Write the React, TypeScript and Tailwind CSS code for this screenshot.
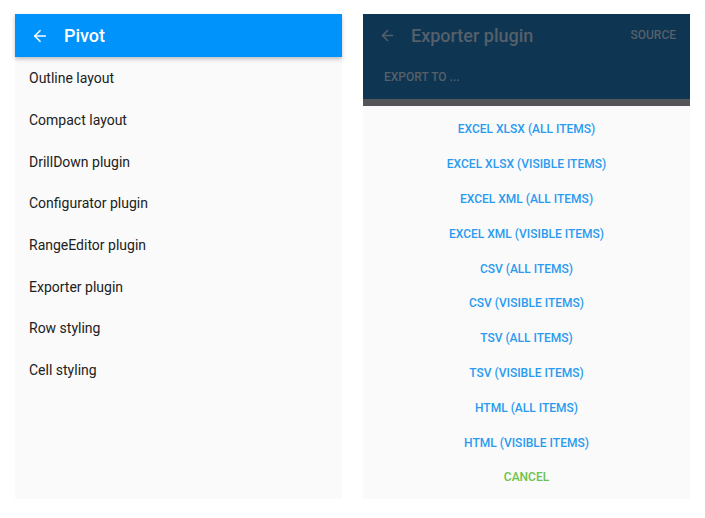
import { ArrowLeft } from "lucide-react";

const demos = [
  "Outline layout",
  "Compact layout",
  "DrillDown plugin",
  "Configurator plugin",
  "RangeEditor plugin",
  "Exporter plugin",
  "Row styling",
  "Cell styling",
];

const exportOptions = [
  "EXCEL XLSX (ALL ITEMS)",
  "EXCEL XLSX (VISIBLE ITEMS)",
  "EXCEL XML (ALL ITEMS)",
  "EXCEL XML (VISIBLE ITEMS)",
  "CSV (ALL ITEMS)",
  "CSV (VISIBLE ITEMS)",
  "TSV (ALL ITEMS)",
  "TSV (VISIBLE ITEMS)",
  "HTML (ALL ITEMS)",
  "HTML (VISIBLE ITEMS)",
];

function PivotScreen() {
  return (
    <div className="flex h-[485px] w-[327px] flex-col bg-[#fafafa]">
      <div className="relative z-10 flex h-[43px] items-center bg-[#0093fb] px-[16px] shadow-[0_2px_4px_rgba(0,0,0,0.25)]">
        <ArrowLeft className="h-[18px] w-[18px] text-white" strokeWidth={2.2} />
        <span className="ml-[15px] text-[18px] font-medium text-white">Pivot</span>
      </div>
      <ul className="flex flex-col pt-[1px]">
        {demos.map((d) => (
          <li key={d} className="flex h-[41.7px] items-center px-[14px] text-[14px] text-[#212121]">
            {d}
          </li>
        ))}
      </ul>
    </div>
  );
}

function ExporterScreen() {
  return (
    <div className="flex h-[485px] w-[327px] flex-col bg-[#fafafa]">
      <div className="flex h-[85px] flex-col bg-[#0e3552]">
        <div className="flex h-[42px] items-center pl-[16px] pr-[14px]">
          <ArrowLeft className="h-[17px] w-[17px] text-[#55606a]" strokeWidth={2.2} />
          <span className="ml-[15px] text-[18px] font-medium text-[#55606a]">Exporter plugin</span>
          <span className="ml-auto text-[12px] font-medium text-[#55606a]">SOURCE</span>
        </div>
        <div className="flex h-[43px] items-center px-[21px] pb-[2px] text-[12px] font-medium text-[#55606a]">
          EXPORT TO ...
        </div>
      </div>
      <div className="h-[7px] bg-[#535558]" />
      <div className="flex flex-col pt-[6px]">
        {exportOptions.map((o) => (
          <button key={o} className="h-[34.8px] text-[12px] font-medium text-[#2a9af0]">
            {o}
          </button>
        ))}
        <button className="h-[34.8px] text-[12px] font-medium text-[#6cc24a]">CANCEL</button>
      </div>
    </div>
  );
}

export default function App() {
  return (
    <div
      className="flex h-[518px] w-[705px] gap-[21px] bg-white pl-[15px] pt-[14px]"
      style={{ fontFamily: "Roboto, 'Noto Sans', sans-serif" }}
    >
      <PivotScreen />
      <ExporterScreen />
    </div>
  );
}
